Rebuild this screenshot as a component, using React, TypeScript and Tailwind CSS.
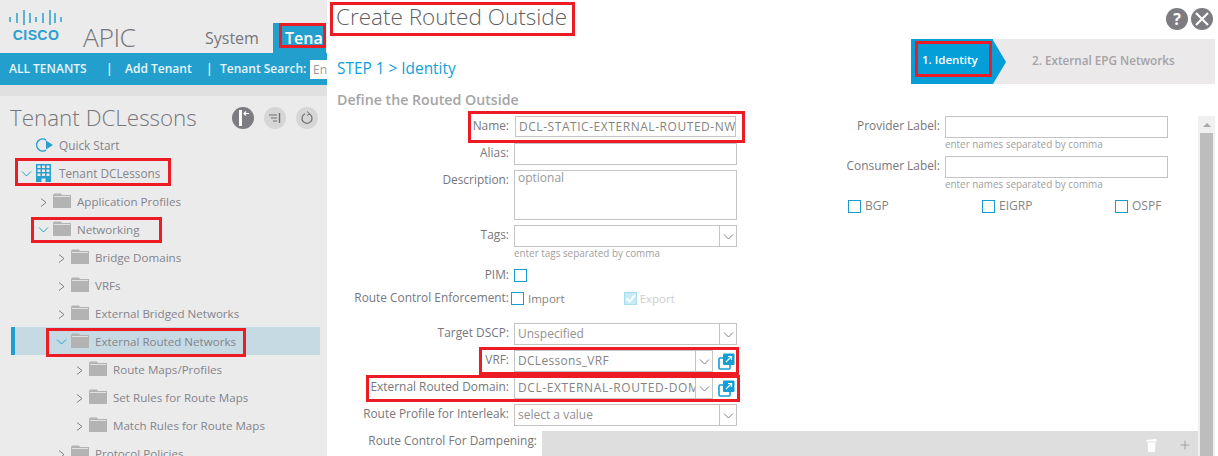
import { Plus } from 'lucide-react';

const FONT = "font-['Open_Sans','Noto_Sans',sans-serif]";

const INDENT: Record<number, string> = {
  1: 'pl-[22px]',
  2: 'pl-[40px]',
  3: 'pl-[58px]',
};

const TREE = [
  { level: 1, label: 'Application Profiles', open: false },
  { level: 1, label: 'Networking', open: true },
  { level: 2, label: 'Bridge Domains', open: false },
  { level: 2, label: 'VRFs', open: false },
  { level: 2, label: 'External Bridged Networks', open: false },
  { level: 2, label: 'External Routed Networks', open: true, selected: true },
  { level: 3, label: 'Route Maps/Profiles', open: false },
  { level: 3, label: 'Set Rules for Route Maps', open: false },
  { level: 3, label: 'Match Rules for Route Maps', open: false },
  { level: 2, label: 'Protocol Policies', open: false },
];

const ANNOTATIONS = [
  'left-[279px] top-[23px] w-[47px] h-[25px]',
  'left-[15px] top-[158px] w-[156px] h-[28px]',
  'left-[31px] top-[217px] w-[131px] h-[26px]',
  'left-[46px] top-[328px] w-[200px] h-[29px]',
  'left-[330px] top-[2px] w-[245px] h-[34px]',
  'left-[468px] top-[111px] w-[277px] h-[32px]',
  'left-[479px] top-[347px] w-[260px] h-[28px]',
  'left-[366px] top-[375px] w-[374px] h-[27px]',
  'left-[915px] top-[41px] w-[77px] h-[36px]',
];

function CiscoLogo() {
  const bars = [
    [1, 8, 13],
    [8, 4, 14],
    [15, 1, 16],
    [21, 4, 14],
    [27, 8, 13],
    [34, 4, 14],
    [41, 1, 16],
    [46, 4, 14],
    [52, 8, 13],
  ];
  return (
    <div className="flex flex-col items-center w-[54px]">
      <svg width="54" height="16" viewBox="0 0 54 16" className="text-[#2aa0d0]">
        {bars.map(([x, y1, y2]) => (
          <line key={x} x1={x} x2={x} y1={y1} y2={y2} stroke="currentColor" strokeWidth="1.5" />
        ))}
      </svg>
      <span className="mt-[3px] text-[14px] leading-[14px] font-bold tracking-[0.4px] text-[#2aa0d0] font-['Liberation_Sans',sans-serif]">
        CISCO
      </span>
    </div>
  );
}

function Chevron({ open }: { open: boolean }) {
  return open ? (
    <svg width="13" height="13" viewBox="0 0 13 13" className="flex-none">
      <path d="M2 4.5 L6.5 9 L11 4.5" stroke="#2aa0d0" strokeWidth="1" fill="none" />
    </svg>
  ) : (
    <svg width="13" height="13" viewBox="0 0 13 13" className="flex-none mt-[3px]">
      <path d="M4 2.5 L9 6.5 L4 10.5" stroke="#808080" strokeWidth="1" fill="none" />
    </svg>
  );
}

function Folder() {
  return (
    <svg width="18" height="15" viewBox="0 0 18 15" className="flex-none -mt-[2px]">
      <path d="M0 2 L1 0.5 H8 L9 2 H18 V15 H0 Z" fill="#b3b3b3" />
      <rect x="1" y="3" width="16" height="1" fill="#e2e2e2" />
    </svg>
  );
}

function TreeRow({ level, label, open, selected }: { level: number; label: string; open: boolean; selected?: boolean }) {
  return (
    <div
      className={`h-[28px] ml-[11px] mr-[7px] border-l-[4px] flex items-center ${INDENT[level]} ${
        selected ? 'bg-[#c6dae4] border-[#1f9fd0]' : 'border-transparent'
      }`}
    >
      <Chevron open={open} />
      <span className="w-[3px] flex-none" />
      <Folder />
      <span className="ml-[6px] mt-[2px] text-[11.6px] text-[#84848c] whitespace-nowrap">{label}</span>
    </div>
  );
}

function Sidebar() {
  return (
    <aside className="w-[327px] h-[456px] flex-none bg-[#ebebeb] overflow-hidden">
      <div className="h-[53px] flex items-end">
        <div className="w-[83px] h-[53px] pl-[9px] pt-[9px] flex-none">
          <CiscoLogo />
        </div>
        <span className="w-[122px] flex-none text-[26.5px] leading-[32px] font-light text-[#76767c] tracking-[-0.5px]">APIC</span>
        <span className="w-[68px] flex-none text-[16px] leading-[30px] text-[#76767c]">System</span>
        <div className="w-[53px] h-[30px] flex-none bg-[#229fcd] pl-[12px] overflow-hidden">
          <span className="text-[16px] leading-[30px] font-semibold text-white">Tenants</span>
        </div>
      </div>
      <div className="h-[32px] bg-[#229fcd] flex items-center pl-[9px] text-[12px] font-semibold text-white/90 whitespace-nowrap overflow-hidden">
        <span className="w-[97px] flex-none">ALL TENANTS</span>
        <span className="w-[19px] flex-none">|</span>
        <span className="w-[81px] flex-none">Add Tenant</span>
        <span className="w-[14px] flex-none">|</span>
        <span className="w-[90px] flex-none">Tenant Search:</span>
        <div className="w-[20px] h-[19px] flex-none bg-white pl-[3px] text-[12px] font-normal leading-[19px] text-[#999]">En</div>
      </div>
      <div className="h-[11px] bg-[#e0e0e0]" />
      <div className="h-[27px] flex items-center pl-[10px] mt-[8px]">
        <span className="w-[222px] flex-none text-[22.4px] font-light text-[#76767c] whitespace-nowrap">Tenant DCLessons</span>
        <div className="w-[22px] h-[22px] flex-none rounded-full bg-[#7c7c82] flex items-center justify-center">
          <svg width="14" height="16" viewBox="0 0 14 16" className="text-white">
            <rect x="3" y="0" width="3" height="16" fill="currentColor" />
            <path d="M13 3.5 H8 M10 1.5 L8 3.5 L10 5.5" stroke="currentColor" fill="none" strokeWidth="1.2" />
          </svg>
        </div>
        <div className="w-[22px] h-[22px] flex-none ml-[10px] rounded-full bg-[#d6d6d6] flex items-center justify-center">
          <svg width="14" height="12" viewBox="0 0 14 12" className="text-[#6f6f75]">
            <path d="M1 3 H9 M3 6 H9 M5 9 H9" stroke="currentColor" strokeWidth="1.1" />
            <path d="M11.5 1 V11" stroke="currentColor" strokeWidth="1.4" />
          </svg>
        </div>
        <div className="w-[22px] h-[22px] flex-none ml-[10px] rounded-full bg-[#d6d6d6] flex items-center justify-center">
          <svg width="14" height="14" viewBox="0 0 14 14" className="text-[#6f6f75]">
            <path d="M5 2.8 A5 5 0 1 0 9 2.8" stroke="currentColor" fill="none" strokeWidth="1.2" />
            <path d="M7 0.5 L9.5 2.8 L7 4.5" stroke="currentColor" fill="none" strokeWidth="1" />
          </svg>
        </div>
      </div>
      {/* quick start */}
      <div className="h-[28px] flex items-center pl-[35px]">
        <svg width="18" height="14" viewBox="0 0 18 14" className="flex-none">
          <path d="M11 2 A6 6 0 1 0 11 12" stroke="#2aa0d0" strokeWidth="1.5" fill="none" />
          <path d="M11 2.5 L18 7 L11 11.5 Z" fill="#2aa0d0" />
        </svg>
        <span className="ml-[6px] mt-[2px] text-[11.8px] text-[#84848c]">Quick Start</span>
      </div>
      <div className="h-[28px] flex items-center pl-[20px]">
        <Chevron open />
        <svg width="15" height="18" viewBox="0 0 15 18" className="flex-none ml-[3px]">
          <path
            fillRule="evenodd"
            clipRule="evenodd"
            fill="#2aa0d0"
            d="M0 0 H15 V18 H9.5 V14.5 H5.5 V18 H0 Z M1.5 1.5 V4 H4.5 V1.5 Z M6 1.5 V4 H9 V1.5 Z M10.5 1.5 V4 H13.5 V1.5 Z M1.5 5.5 V8 H4.5 V5.5 Z M6 5.5 V8 H9 V5.5 Z M10.5 5.5 V8 H13.5 V5.5 Z M1.5 9.5 V12 H4.5 V9.5 Z M6 9.5 V12 H9 V9.5 Z M10.5 9.5 V12 H13.5 V9.5 Z"
          />
        </svg>
        <span className="ml-[8px] mt-[2px] text-[11.8px] text-[#84848c]">Tenant DCLessons</span>
      </div>
      {TREE.map((row) => (
        <TreeRow key={row.label} {...row} />
      ))}
    </aside>
  );
}

function Dropdown({ value, textClass = 'text-[#848484]', w = 'w-[223px]' }: { value?: string; textClass?: string; w?: string }) {
  return (
    <div className={`${w} h-[22px] flex-none flex border border-[#c4c4c4] bg-white`}>
      <div className={`flex-1 min-w-0 overflow-hidden whitespace-nowrap pl-[3px] text-[12px] leading-[20px] ${textClass}`}>{value}</div>
      <div className="w-[17px] flex-none border-l border-[#c4c4c4] flex items-center justify-center">
        <svg width="13" height="13" viewBox="0 0 13 13">
          <path d="M2 4.5 L6.5 9 L11 4.5" stroke="#7c7c82" strokeWidth="1" fill="none" />
        </svg>
      </div>
    </div>
  );
}

function FormRow({ label, tight, children, className = '' }: { label: string; tight?: boolean; children: React.ReactNode; className?: string }) {
  return (
    <div className={`flex items-start ${className}`}>
      <label className={`w-[182px] flex-none text-right text-[11.9px] text-[#77777d] whitespace-nowrap ${tight ? 'leading-[10px]' : 'leading-[18px]'}`}>{label}</label>
      <div className="ml-[5px] flex items-center">{children}</div>
    </div>
  );
}

function LinkIcon() {
  return (
    <svg width="17" height="17" viewBox="0 0 17 17" className="flex-none ml-[5px]">
      <rect x="1" y="5" width="11" height="11" rx="1" fill="white" stroke="#119fd6" strokeWidth="1.6" />
      <rect x="5" y="0.5" width="11.5" height="11.5" rx="1" fill="#119fd6" />
      <path d="M8 9 L13 4 M10 3.5 H13.5 V7" stroke="white" strokeWidth="1.2" fill="none" />
    </svg>
  );
}

function Box({ className = '' }: { className?: string }) {
  return <span className={`block w-[13px] h-[13px] flex-none border border-[#1a9cd2] bg-white ${className}`} />;
}

function LeftForm() {
  return (
    <div className="w-[420px] flex-none">
      <FormRow label="Name:">
        <div className="w-[221px] h-[21px] ml-[1px] border border-[#c4c4c4] pl-[3px] text-[12px] leading-[19px] tracking-[0.55px] text-[#848484] whitespace-nowrap overflow-hidden">
          DCL-STATIC-EXTERNAL-ROUTED-NW
        </div>
      </FormRow>
      <FormRow label="Alias:" className="mt-[6px]">
        <div className="w-[223px] h-[22px] border border-[#c4c4c4]" />
      </FormRow>
      <FormRow label="Description:" className="mt-[5px]">
        <div className="w-[223px] h-[50px] border border-[#c4c4c4] pl-[3px] text-[12px] leading-[14px] text-[#999]">optional</div>
      </FormRow>
      <FormRow label="Tags:" className="mt-[5px]">
        <Dropdown />
      </FormRow>
      <div className="pl-[187px] h-[12px] text-[9.9px] leading-[12px] text-[#a0a0a0]">enter tags separated by comma</div>
      <FormRow label="PIM:" tight className="mt-[10px] h-[18px]">
        <Box />
      </FormRow>
      <FormRow label="Route Control Enforcement:" tight className="mt-[5px] h-[18px]">
        <Box className="-ml-[3px]" />
        <span className="ml-[4px] text-[11.5px] leading-[13px] text-[#848484]">Import</span>
        <span className="ml-[59px] w-[13px] h-[13px] flex-none border border-[#a8dcf0] bg-[#c9e9f5] flex items-center justify-center">
          <svg width="11" height="11" viewBox="0 0 11 11">
            <path d="M1.5 5.5 L4.5 8.5 L10 2" stroke="white" strokeWidth="2" fill="none" />
          </svg>
        </span>
        <span className="ml-[3px] text-[11.5px] leading-[13px] text-[#cecece]">Export</span>
      </FormRow>
      <FormRow label="Target DSCP:" className="mt-[13px]">
        <Dropdown value="Unspecified" textClass="text-[#929292]" />
      </FormRow>
      <FormRow label="VRF:" className="mt-[5px]">
        <Dropdown value="DCLessons_VRF" textClass="tracking-[0.3px] text-[#848484]" w="w-[199px]" />
        <LinkIcon />
      </FormRow>
      <FormRow label="External Routed Domain:" className="mt-[5px]">
        <Dropdown value="DCL-EXTERNAL-ROUTED-DOMAIN" textClass="tracking-[0.6px] text-[#848484]" w="w-[199px]" />
        <LinkIcon />
      </FormRow>
      <FormRow label="Route Profile for Interleak:" className="mt-[5px]">
        <Dropdown value="select a value" textClass="text-[#929292]" />
      </FormRow>
    </div>
  );
}

function LabelField({ label, className = '' }: { label: string; className?: string }) {
  return (
    <div className={`flex items-start ${className}`}>
      <label className="w-[193px] flex-none text-right text-[11.9px] leading-[18px] text-[#77777d]">{label}</label>
      <div className="ml-[5px]">
        <div className="w-[223px] h-[22px] border border-[#c4c4c4]" />
        <div className="h-[13px] text-[9.9px] leading-[13px] text-[#a0a0a0]">enter names separated by comma</div>
      </div>
    </div>
  );
}

function RightForm() {
  return (
    <div className="flex-1 min-w-0">
      <LabelField label="Provider Label:" />
      <LabelField label="Consumer Label:" className="mt-[5px]" />
      <div className="flex items-center mt-[6px] pl-[101px] text-[12px] text-[#848484]">
        <div className="w-[134px] flex items-center flex-none">
          <Box />
          <span className="ml-[4px]">BGP</span>
        </div>
        <div className="w-[133px] flex items-center flex-none">
          <Box />
          <span className="ml-[4px]">EIGRP</span>
        </div>
        <div className="flex items-center">
          <Box />
          <span className="ml-[4px]">OSPF</span>
        </div>
      </div>
    </div>
  );
}

function MainPanel() {
  return (
    <main className="w-[888px] h-[456px] flex-none bg-white flex flex-col overflow-hidden">
      <div className="h-[39px] flex-none pl-[9px]">
        <h1 className="text-[22.5px] leading-[34px] font-light text-[#5f5f63]">Create Routed Outside</h1>
      </div>
      <div className="h-[45px] flex-none flex items-start">
        <div className="w-[584px] flex-none pl-[10px] pt-[20px] text-[15.4px] leading-[20px] text-[#0f9fdb]">STEP 1 &gt; Identity</div>
        <div className="flex-1 h-[45px] bg-[#ebe9ea] flex items-center">
          <div className="w-[82px] h-[45px] flex-none bg-[#049fd9] pl-[11px] text-[11.5px] leading-[42px] font-semibold text-white">1. Identity</div>
          <div className="w-0 h-0 flex-none border-y-[22.5px] border-y-transparent border-l-[13px] border-l-[#049fd9]" />
          <span className="ml-[26px] pb-[2px] text-[11.7px] font-semibold text-[#a3a3a7] whitespace-nowrap">2. External EPG Networks</span>
        </div>
      </div>
      <div className="h-[32px] flex-none pl-[10px] pt-[7px] text-[14.2px] leading-[18px] font-semibold text-[#a5a5a5]">Define the Routed Outside</div>
      <div className="flex-1 min-h-0 flex">
        <div className="flex-1 min-w-0">
          <div className="flex">
            <LeftForm />
            <RightForm />
          </div>
          <div className="flex items-start mt-[5px]">
            <label className="w-[210px] flex-none text-right text-[11.9px] leading-[18px] text-[#77777d] whitespace-nowrap">Route Control For Dampening:</label>
            <div className="ml-[5px] flex-1 h-[25px] bg-[#dedede] flex items-center justify-end pr-[6px] pt-[3px]">
              <svg width="11" height="13" viewBox="0 0 11 13" className="text-white mr-[21px]">
                <path d="M0.5 1 L10.5 0 V2.5 H0.5 Z M1.5 3.5 H9.5 L8.8 13 H2.2 Z" fill="currentColor" />
              </svg>
              <Plus size={14} strokeWidth={1.5} className="text-[#9a9a9a]" />
            </div>
          </div>
        </div>
        <div className="w-[17px] flex-none bg-[#f0f0f0] flex flex-col items-center">
          <div className="h-[17px] flex-none flex items-center justify-center">
            <span className="w-0 h-0 border-x-[4px] border-x-transparent border-b-[4px] border-b-[#a8a8a8]" />
          </div>
          <div className="w-[13px] flex-1 bg-[#bdbdbd]" />
        </div>
      </div>
    </main>
  );
}

function ModalButtons() {
  return (
    <div className="absolute left-[1166px] top-[8px] flex gap-[3px]">
      <div className="w-[22px] h-[22px] rounded-full bg-[#7c7c82] flex items-center justify-center text-[16px] font-bold leading-none text-white">?</div>
      <div className="w-[22px] h-[22px] rounded-full bg-[#7c7c82] flex items-center justify-center">
        <svg width="16" height="16" viewBox="0 0 16 16">
          <path d="M2 2 L14 14 M14 2 L2 14" stroke="white" strokeWidth="2.2" />
        </svg>
      </div>
    </div>
  );
}

export default function App() {
  return (
    <div className={`relative w-[1218px] h-[456px] flex overflow-hidden bg-white ${FONT}`}>
      <Sidebar />
      <MainPanel />
      <ModalButtons />
      {ANNOTATIONS.map((pos) => (
        <div key={pos} className={`absolute border-[3px] border-[#ed1c24] pointer-events-none ${pos}`} />
      ))}
    </div>
  );
}
